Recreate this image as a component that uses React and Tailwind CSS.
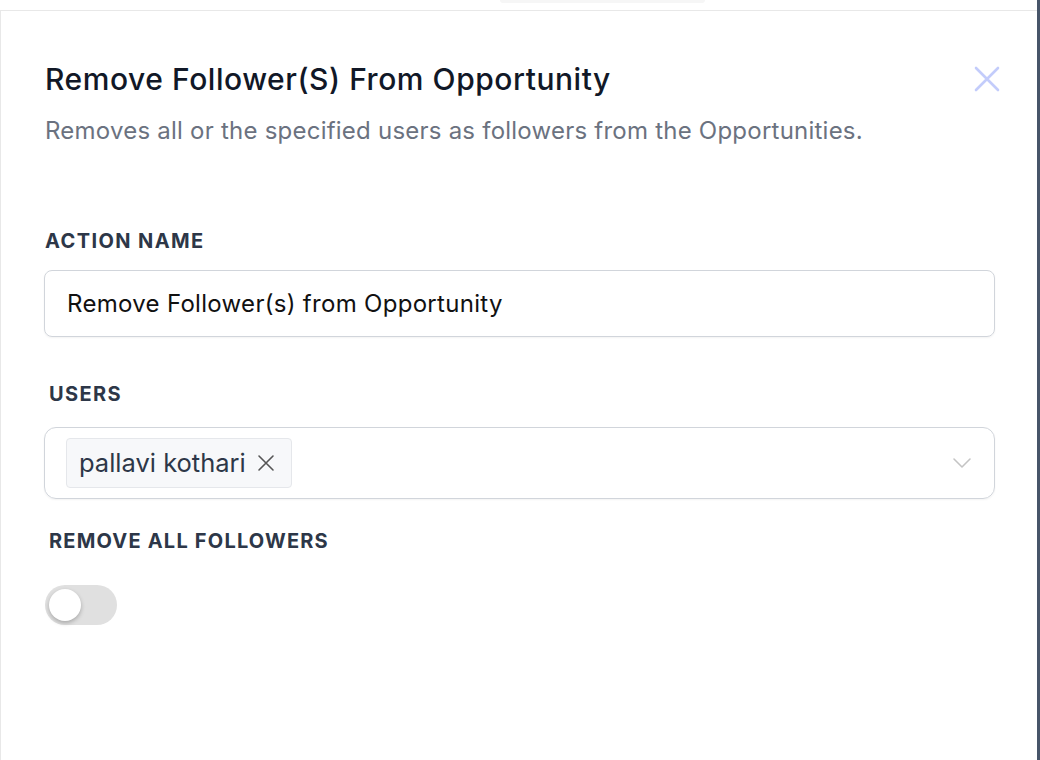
export default function App() {
  return (
    <div className="w-[1040px] h-[760px] bg-white flex overflow-hidden" style={{ fontFamily: 'Inter, "Noto Sans", sans-serif' }}>
      <div className="flex-1 flex flex-col">
        <div className="h-[10px] relative">
          <div className="absolute left-[500px] top-0 w-[205px] h-[3px] bg-[#f6f6f6] rounded-b-md"></div>
        </div>
        <div className="flex-1 border-t border-l border-[#e8e8e8] pl-[43px] pr-[42px] pt-[50px]">
          <div className="flex justify-between items-start">
            <h1 className="text-[30px] leading-[36px] font-medium text-[#111827] ml-px tracking-[0.55px]">Remove Follower(S) From Opportunity</h1>
            <button className="mt-[3px] mr-[-7px] text-[#c3ccfb]">
              <svg width="30" height="30" viewBox="0 0 30 30" fill="none" stroke="currentColor" strokeWidth="2.6" strokeLinecap="round">
                <path d="M4 4 L26 26 M26 4 L4 26" />
              </svg>
            </button>
          </div>
          <p className="mt-[18px] ml-px text-[24px] leading-[32px] text-[#6b7280] tracking-[0.23px]">Removes all or the specified users as followers from the Opportunities.</p>

          <div className="mt-[82px] text-[20px] leading-[24px] font-bold tracking-[1.4px] text-[#2d3748] ml-px">ACTION NAME</div>
          <div className="mt-[17px] w-[951px] h-[67px] rounded-[8px] border border-[#d1d5db] shadow-[0_1px_2px_rgba(0,0,0,0.05)] flex items-center px-[22px] text-[24px] text-[#111111] tracking-[0.3px]">
            Remove Follower(s) from Opportunity
          </div>

          <div className="mt-[45px] ml-[5px] text-[20px] leading-[24px] font-bold tracking-[1.4px] text-[#2d3748]">USERS</div>
          <div className="mt-[21px] w-[951px] h-[72px] rounded-[12px] border border-[#d1d5db] shadow-[0_1px_2px_rgba(0,0,0,0.05)] flex items-center pl-[21px] pr-[22px]">
            <div className="h-[50px] flex items-center gap-[11px] pl-[12px] pr-[16px] rounded-[4px] border border-[#e5e7eb] bg-[#f7f8fa] text-[25.5px] text-[#2d3748]">
              <span>pallavi kothari</span>
              <svg width="18" height="18" viewBox="0 0 18 18" fill="none" stroke="#555" strokeWidth="1.6" strokeLinecap="round">
                <path d="M2 2 L16 16 M16 2 L2 16" />
              </svg>
            </div>
            <div className="flex-1"></div>
            <svg width="20" height="12" viewBox="0 0 20 12" fill="none" stroke="#c4c4c4" strokeWidth="1.6" strokeLinecap="round" strokeLinejoin="round">
              <path d="M2 2 L10 10 L18 2" />
            </svg>
          </div>

          <div className="mt-[30px] ml-[5px] text-[20px] leading-[24px] font-bold tracking-[1.2px] text-[#2d3748]">REMOVE ALL FOLLOWERS</div>
          <div className="mt-[32px] ml-px w-[72px] h-[40px] rounded-full bg-[#e0e0e0] flex items-center px-[4px]">
            <div className="w-[32px] h-[32px] rounded-full bg-white shadow-[0_2px_4px_rgba(0,0,0,0.25)]"></div>
          </div>
        </div>
      </div>
      <div className="w-[3px] bg-[#475569]"></div>
    </div>
  );
}
